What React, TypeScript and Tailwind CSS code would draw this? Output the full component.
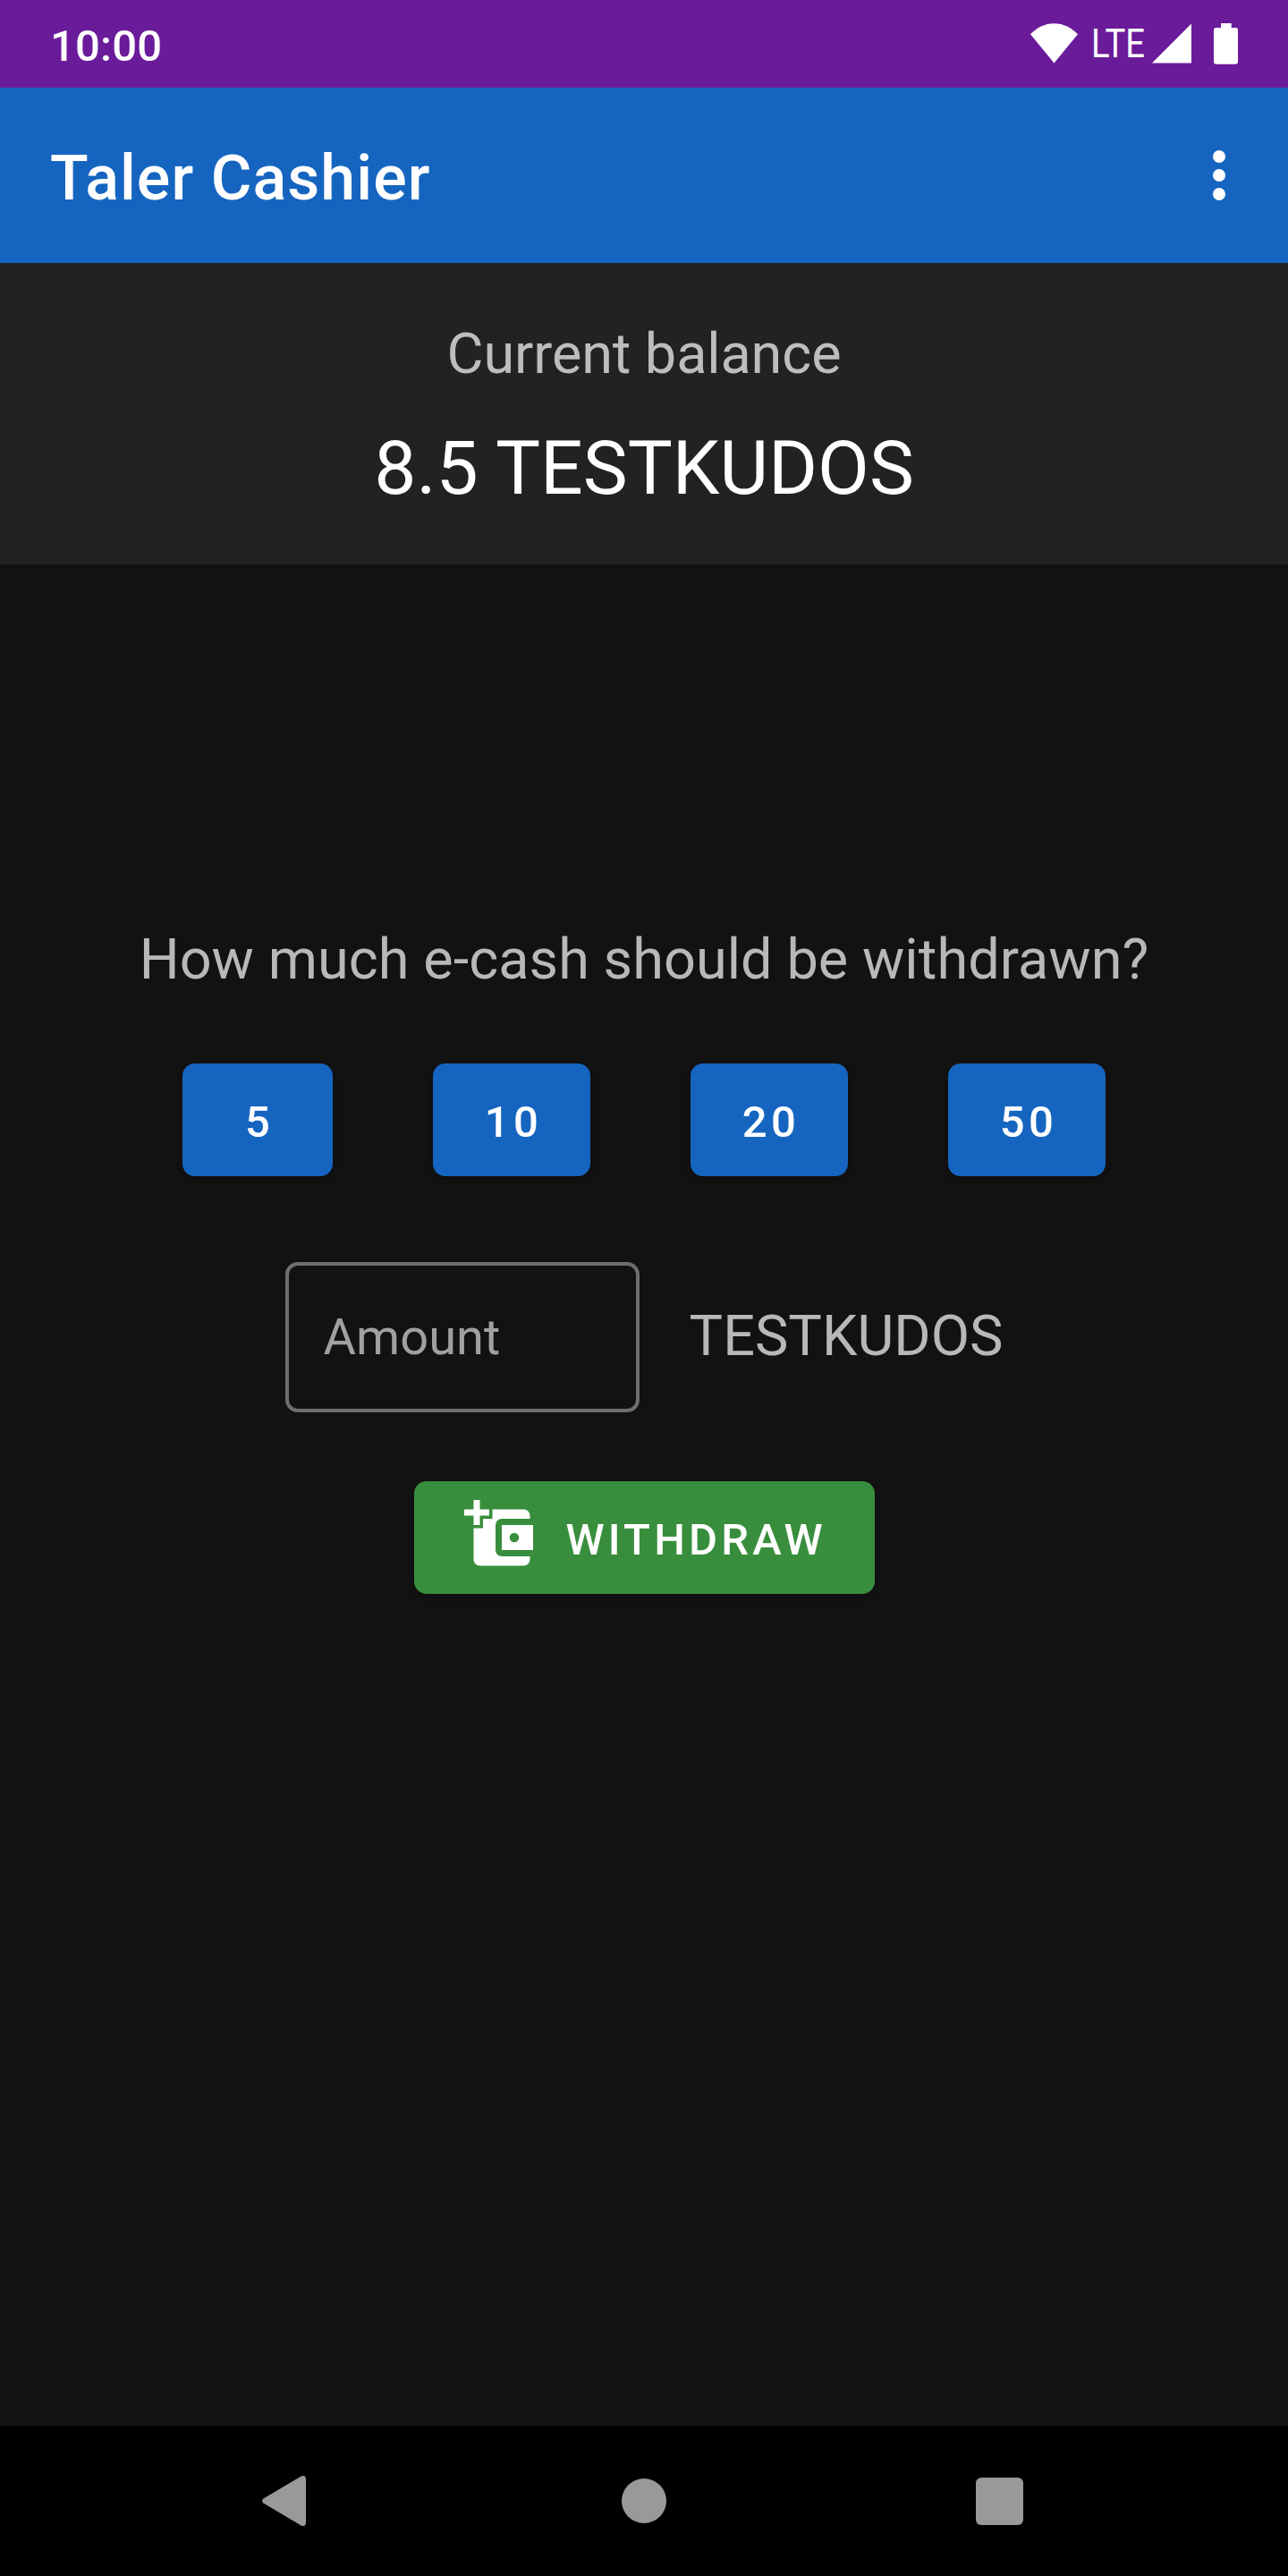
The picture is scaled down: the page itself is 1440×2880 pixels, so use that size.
import React from "react";

const amounts = [
  { label: "5", width: "w-[168px]" },
  { label: "10", width: "w-[176px]" },
  { label: "20", width: "w-[176px]" },
  { label: "50", width: "w-[176px]" },
];

function StatusBar() {
  return (
    <div className="flex h-[98px] justify-between bg-[#6a1b9a] pl-[56px] pr-[56px]">
      <span className="pt-[23px] text-[49px] leading-[58px] font-medium tracking-[0.2px]">10:00</span>
      <div className="flex items-start">
        <svg className="mt-[26px] h-[45px] w-[53px]" viewBox="0 0 53 45" fill="currentColor">
          <path d="M26.5 44.5L0 12.3C7 5 16 0.2 26.5 0.2S46 5 53 12.3z" />
        </svg>
        <span className="ml-[15px] w-[68px] origin-left scale-x-[0.868] pt-[23px] text-[44px] leading-[52px]">LTE</span>
        <svg className="mt-[26px] h-[45px] w-[44px]" viewBox="0 0 44 45" fill="currentColor">
          <path d="M44 0.5V44.5H0z" />
        </svg>
        <svg className="ml-[25px] mt-[26px] h-[46px] w-[27px]" viewBox="0 0 27 46" fill="currentColor">
          <path d="M8 0h11.7v5H24.5A2.5 2.5 0 0 1 27 7.5V43a2.7 2.7 0 0 1-2.7 2.7H2.7A2.7 2.7 0 0 1 0 43V7.5A2.5 2.5 0 0 1 2.5 5H8z" />
        </svg>
      </div>
    </div>
  );
}

function AppBar() {
  return (
    <header className="flex h-[196px] items-center justify-between bg-[#1565c0] pl-[56px] pr-[70px]">
      <h1 className="pt-[6px] text-[70px] leading-[82px] font-medium tracking-[1.06px]">Taler Cashier</h1>
      <button aria-label="More options" className="flex flex-col gap-[7px]">
        <span className="size-[14px] rounded-full bg-white" />
        <span className="size-[14px] rounded-full bg-white" />
        <span className="size-[14px] rounded-full bg-white" />
      </button>
    </header>
  );
}

function WalletPlusIcon() {
  return (
    <svg className="mt-[21px] h-[73.5px] w-[77px]" viewBox="0 0 22 21" fill="currentColor">
      <path d="M3 0h2v3h3v2H5v3H3V5H0V3h3z" />
      <path d="M9 3h10a2 2 0 0 1 2 2v1h-9a2 2 0 0 0-2 2v8a2 2 0 0 0 2 2h9v1a2 2 0 0 1-2 2H5a2 2 0 0 1-2-2V9h3V6h3z" />
      <path fillRule="evenodd" d="M12 8h10v8H12zM16 10.5a1.5 1.5 0 1 0 0 3a1.5 1.5 0 0 0 0-3z" />
    </svg>
  );
}

function NavBar() {
  return (
    <nav className="flex h-[168px] items-center bg-black pl-[293px] text-[#999999]">
      <svg className="h-[56px] w-[49px]" viewBox="0 0 49 56" fill="currentColor">
        <path d="M1.4 25.4L43.6 0.6Q49 -1.6 49 4V52Q49 57.6 43.6 55.4L1.4 30.6Q-1.2 28 1.4 25.4z" />
      </svg>
      <span className="ml-[353px] size-[50px] rounded-full bg-[#999999]" />
      <span className="ml-[346px] size-[53px] rounded-[6px] bg-[#999999]" />
    </nav>
  );
}

export default function App() {
  return (
    <div className="flex h-[2880px] w-[1440px] flex-col overflow-hidden bg-[#121212] font-['Roboto',sans-serif] text-white">
      <StatusBar />
      <AppBar />
      <section className="flex h-[337px] flex-col items-center bg-[#222222] pt-[65px]">
        <p className="text-[63px] leading-[74px] tracking-[-0.12px] text-[#bdbdbd]">Current balance</p>
        <p className="mt-[42px] text-[84px] leading-[98px]">8.5 TESTKUDOS</p>
      </section>
      <main className="flex flex-1 flex-col items-center pt-[405px]">
        <p className="text-[63px] leading-[74px] tracking-[0.06px] text-[#b8b8b8]">How much e-cash should be withdrawn?</p>
        <div className="mt-[79px] flex gap-[112px]">
          {amounts.map((a) => (
            <button
              key={a.label}
              className={`${a.width} h-[126px] rounded-[14px] bg-[#1565c0] pt-[6px] pl-[4px] text-[49px] leading-[58px] font-medium tracking-[4.375px] shadow-[0_3px_6px_rgba(0,0,0,0.2)]`}
            >
              {a.label}
            </button>
          ))}
        </div>
        <div className="mt-[96px] flex h-[168px] items-center">
          <div className="flex h-[168px] w-[396px] items-center rounded-[14px] border-4 border-[#6e6e6e] pl-[39px] text-[56px] leading-[66px] text-[#a0a0a0]">
            Amount
          </div>
          <span className="ml-[56px] pb-[2px] text-[63px] leading-[74px] text-[#b8b8b8]">TESTKUDOS</span>
        </div>
        <button className="mt-[77px] flex h-[126px] w-[515px] rounded-[14px] bg-[#388e3c] pl-[56px] shadow-[0_3px_6px_rgba(0,0,0,0.2)]">
          <WalletPlusIcon />
          <span className="ml-[37px] pt-[37px] text-[49px] leading-[58px] font-medium tracking-[4.15px]">WITHDRAW</span>
        </button>
      </main>
      <NavBar />
    </div>
  );
}
